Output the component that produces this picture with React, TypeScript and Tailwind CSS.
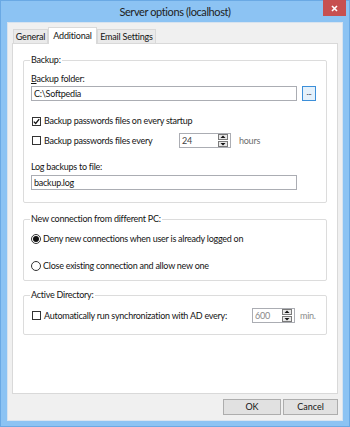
import React from "react";

const font = "font-['Lato',sans-serif]";

function Check({ checked = false }: { checked?: boolean }) {
  return (
    <span className="w-[9px] h-[9px] border border-[#333333] bg-white flex items-center justify-center shrink-0">
      {checked && (
        <svg width="7" height="7" viewBox="0 0 7 7">
          <path d="M0.8 3.6 L2.7 5.5 L6.2 1.2" stroke="#111" strokeWidth="1.3" fill="none" />
        </svg>
      )}
    </span>
  );
}

function Radio({ checked = false }: { checked?: boolean }) {
  return (
    <span className="w-[10px] h-[10px] rounded-full border border-[#333333] bg-white flex items-center justify-center shrink-0">
      {checked && <span className="w-[6px] h-[6px] rounded-full bg-[#111111]" />}
    </span>
  );
}

function Spin({ value, width, color }: { value: string; width: string; color: string }) {
  return (
    <div className={`flex items-center justify-between border border-[#abadb3] bg-white h-[15px] pl-[2px] pr-[2px] shrink-0 ${width}`}>
      <span className={`text-[9px] leading-[12px] ${color}`}>{value}</span>
      <div className="flex flex-col gap-[1px]">
        <svg width="10" height="6" viewBox="0 0 10 6">
          <rect x="0.5" y="0.5" width="9" height="5" fill="#e8e8e8" stroke="#7a7a7a" />
          <path d="M2.5 4 L5 1.5 L7.5 4 Z" fill="#111" />
        </svg>
        <svg width="10" height="6" viewBox="0 0 10 6">
          <rect x="0.5" y="0.5" width="9" height="5" fill="#e8e8e8" stroke="#7a7a7a" />
          <path d="M2.5 2 L5 4.5 L7.5 2 Z" fill="#111" />
        </svg>
      </div>
    </div>
  );
}

function Legend({ children }: { children: React.ReactNode }) {
  return (
    <span className="block w-fit -mt-[7px] -ml-[1px] px-[1px] bg-white leading-[12px] text-[9px] whitespace-nowrap">
      {children}
    </span>
  );
}

export default function App() {
  return (
    <div className={`w-[350px] h-[427px] bg-[#8cc3f3] border border-[#6aa9e4] flex flex-col ${font} text-[#141414]`}>
      {/* Title bar */}
      <div className="relative h-[21px] flex items-center justify-center">
        <span className="text-[11px] leading-[14px] tracking-[-0.4px] text-[#222222] mt-[1px] whitespace-nowrap">Server options (localhost)</span>
        <div className="absolute top-[-1px] right-[3px] w-[23px] h-[16px] bg-[#c75050] flex items-center justify-center">
          <svg width="7" height="7" viewBox="0 0 7 7">
            <path d="M1 1 L6 6 M6 1 L1 6" stroke="#ffffff" strokeWidth="1.6" />
          </svg>
        </div>
      </div>

      {/* Client area */}
      <div className="mx-[6px] mb-[5px] flex-1 bg-[#f0f0f0] border border-[#d7e3ef] px-[4px] flex flex-col">
        {/* Tabs */}
        <div className="relative z-10 h-[20px] pt-[4px] flex items-end pl-[1px] text-[9px] tracking-[-0.2px] whitespace-nowrap">
          <div className="h-[14px] w-[35px] border border-b-0 border-[#d9d9d9] bg-[#eaeaea] flex items-center justify-center leading-[12px]">
            General
          </div>
          <div className="h-[17px] -mb-[1px] w-[49px] border border-b-0 border-[#d9d9d9] bg-white flex items-start pt-[2px] justify-center leading-[12px]">
            Additional
          </div>
          <div className="h-[14px] w-[59px] border border-b-0 border-[#d9d9d9] bg-[#eaeaea] flex items-center justify-center leading-[12px]">
            Email Settings
          </div>
        </div>

        {/* Panel */}
        <div className="h-[351px] bg-white border border-[#d9d9d9] pt-[16px] px-[10px] text-[9px] leading-[12px] tracking-[-0.25px] whitespace-nowrap">
          {/* Backup */}
          <div className="border border-[#dcdcdc] rounded-[2px] pl-[7px] pr-[10px] pb-[12px]">
            <Legend>Backup:</Legend>
            <div className="mt-[7px]">
              <span className="underline">B</span>ackup folder:
            </div>
            <div className="mt-[1px] flex items-center">
              <div className="flex-1 h-[15px] border border-[#abadb3] bg-white flex items-center pl-[2px]">
                C:\Softpedia
              </div>
              <div className="ml-[5px] w-[14px] h-[15px] border border-[#3c8fd9] bg-[#e5f1fb] flex items-center justify-center text-[8px] leading-[8px] pb-[3px]">
                ...
              </div>
            </div>
            <div className="mt-[14px] h-[12px] flex items-center gap-[3px] pl-[1px]">
              <Check checked />
              <span>Backup passwords files on every startup</span>
            </div>
            <div className="mt-[6px] h-[15px] flex items-center pl-[1px]">
              <Check />
              <span className="ml-[3px] w-[135px]">Backup passwords files every</span>
              <Spin value="24" width="w-[52px]" color="text-[#444444]" />
              <span className="ml-[8px] text-[#6d6d6d]">hours</span>
            </div>
            <div className="mt-[13px]">Log backups to file:</div>
            <div className="mt-[2px] mr-[19px] h-[15px] border border-[#abadb3] bg-white flex items-center pl-[2px]">
              backup.log
            </div>
          </div>

          {/* New connection */}
          <div className="mt-[16px] border border-[#dcdcdc] rounded-[2px] pl-[7px] pr-[10px] pb-[8px]">
            <Legend>New connection from different PC:</Legend>
            <div className="mt-[8px] h-[12px] flex items-center gap-[2px]">
              <Radio checked />
              <span>Deny new connections when user is already logged on</span>
            </div>
            <div className="mt-[15px] h-[12px] flex items-center gap-[2px]">
              <Radio />
              <span>Close existing connection and allow new one</span>
            </div>
          </div>

          {/* Active Directory */}
          <div className="mt-[14px] border border-[#dcdcdc] rounded-[2px] pl-[7px] pr-[10px] pb-[11px]">
            <Legend>Active Directory:</Legend>
            <div className="mt-[7px] h-[15px] flex items-center pl-[1px]">
              <Check />
              <span className="ml-[3px] w-[208px]">Automatically run synchronization with AD every:</span>
              <Spin value="600" width="w-[43px]" color="text-[#8a8a8a]" />
              <span className="ml-[5px] text-[#8a8a8a]">min.</span>
            </div>
          </div>
        </div>

        {/* Buttons */}
        <div className="mt-[5px] flex justify-end gap-[2px] text-[9px] leading-[12px]">
          <div className="w-[58px] h-[16px] border border-[#adadad] bg-[#e1e1e1] flex items-center justify-center">
            OK
          </div>
          <div className="w-[55px] h-[16px] border border-[#adadad] bg-[#e1e1e1] flex items-center justify-center">
            Cancel
          </div>
        </div>
      </div>
    </div>
  );
}
